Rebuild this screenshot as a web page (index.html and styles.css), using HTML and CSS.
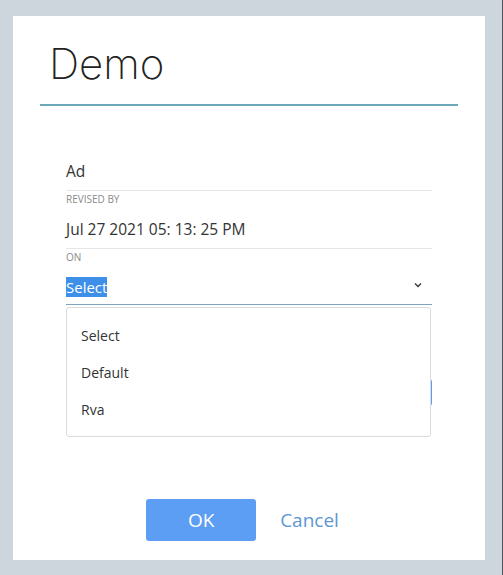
FILE: index.html
```html
<!DOCTYPE html>
<html lang="en">
<head>
    <meta charset="utf-8">
    <meta name="viewport" content="width=device-width, initial-scale=1.0">
    <title>Demo</title>
    <link rel="stylesheet" href="styles.css">
</head>
<body>
    <div class="dialog">
        <div class="dialog-header">
            <h1>Demo</h1>
        </div>

        <div class="dialog-body">
            <div class="field">
                <div class="field-value">Ad</div>
                <div class="field-label">REVISED BY</div>
            </div>
            <div class="field">
                <div class="field-value">Jul 27 2021 05: 13: 25 PM</div>
                <div class="field-label">ON</div>
            </div>

            <div class="select-wrap">
                <div class="select-box">
                    <span class="select-text">Select</span>
                    <svg class="chevron" width="8" height="6" viewBox="0 0 8 6">
                        <path d="M1 1.5 L4 4.5 L7 1.5" fill="none" stroke="#333" stroke-width="1.3"/>
                    </svg>
                </div>
                <button class="apply-button">Apply</button>

                <ul class="select-menu">
                    <li>Select</li>
                    <li>Default</li>
                    <li>Rva</li>
                </ul>
            </div>
        </div>

        <div class="dialog-footer">
            <button class="btn-ok">OK</button>
            <button class="btn-cancel">Cancel</button>
        </div>
    </div>
</body>
</html>
```

FILE: styles.css
```css
body {
    margin: 0;
    height: 575px;
    background: #cdd5dd;
    font-family: "Open Sans", "Noto Sans", sans-serif;
    color: #333;
    border-right: 1px solid #4d535a;
    box-sizing: border-box;
    overflow: hidden;
}

.dialog {
    margin: 16px 0 0 13px;
    width: 472px;
    height: 544px;
    background: #fff;
    display: flex;
    flex-direction: column;
}

.dialog-header {
    margin: 0 27px;
    padding: 21px 0 13px 9px;
    border-bottom: 2px solid #6aa7b7;
}

.dialog-header h1 {
    margin: 0;
    font-family: Inter, "Open Sans", sans-serif;
    font-size: 42px;
    font-weight: 200;
    line-height: 54px;
    color: #222;
}

.dialog-body {
    padding: 54px 53px 0;
}

.field-value {
    font-size: 15.5px;
    line-height: 22px;
    padding-bottom: 8px;
    border-bottom: 1px solid #e6e6e6;
    color: #333;
}

.field-label {
    font-size: 10px;
    line-height: 14px;
    color: #8a8a8a;
    padding: 1px 0 12px;
}

.select-wrap {
    position: relative;
}

.select-box {
    display: flex;
    justify-content: space-between;
    align-items: flex-start;
    height: 28px;
    border-bottom: 1px solid #7fa4c2;
}

.select-text {
    background: #3d8fe9;
    color: #fff;
    font-size: 15px;
    line-height: 20px;
    margin-top: 1px;
}

.chevron {
    margin-right: 10px;
    margin-top: 6px;
}

.apply-button {
    display: block;
    margin: 72px 0 0 auto;
    width: 200px;
    height: 31px;
    background: #fff;
    border: 1px solid #5b9cf5;
    border-radius: 5px;
}

.select-menu {
    position: absolute;
    top: 31px;
    left: 0;
    width: 365px;
    height: 130px;
    margin: 0;
    padding: 9px 0 0;
    list-style: none;
    background: #fff;
    border: 1px solid #dcdcdc;
    border-radius: 3px;
    box-sizing: border-box;
}

.select-menu li {
    padding-left: 14px;
    font-size: 14px;
    line-height: 37px;
    color: #333;
}

.dialog-footer {
    margin-top: auto;
    padding: 0 13px 19px 0;
    display: flex;
    justify-content: center;
    gap: 24px;
}

.btn-ok {
    width: 110px;
    height: 42px;
    background: #5c9ef3;
    color: #fff;
    border: none;
    border-radius: 3px;
    font-family: inherit;
    font-size: 19px;
}

.btn-cancel {
    background: none;
    border: none;
    padding: 0;
    color: #5e97d2;
    font-family: inherit;
    font-size: 19px;
}
```
